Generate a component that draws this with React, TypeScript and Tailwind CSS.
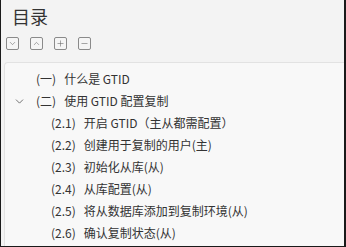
import { ChevronDown, ChevronUp, Plus, Minus } from "lucide-react";

type Item = { label: string; title: string; open?: boolean; children?: Item[] };

const toc: Item[] = [
  { label: "(一)", title: "什么是 GTID" },
  {
    label: "(二)",
    title: "使用 GTID 配置复制",
    open: true,
    children: [
      { label: "(2.1)", title: "开启 GTID（主从都需配置）" },
      { label: "(2.2)", title: "创建用于复制的用户(主)" },
      { label: "(2.3)", title: "初始化从库(从)" },
      { label: "(2.4)", title: "从库配置(从)" },
      { label: "(2.5)", title: "将从数据库添加到复制环境(从)" },
      { label: "(2.6)", title: "确认复制状态(从)" },
    ],
  },
];

const font = { fontFamily: '"Noto Sans CJK SC", "Noto Sans", sans-serif' };

function ToolButton({ children }: { children: React.ReactNode }) {
  return (
    <button className="w-[13px] h-[13px] border border-[#8a8a8a] rounded-[2px] flex items-center justify-center text-[#666] bg-[#f5f5f5]">
      {children}
    </button>
  );
}

function Row({ item, depth }: { item: Item; depth: number }) {
  return (
    <>
      <div
        className="h-[22px] flex items-center text-[12px] text-[#333] whitespace-nowrap"
        style={{ paddingLeft: depth === 0 ? 8 : 23 }}
      >
        <span className="w-[23px] flex items-center">
          {item.children && <ChevronDown size={13} strokeWidth={1.5} className="text-[#555]" />}
        </span>
        <span>{item.label}</span>
        <span className="ml-[8px]">{item.title}</span>
      </div>
      {item.open && item.children?.map((c) => <Row key={c.label} item={c} depth={depth + 1} />)}
    </>
  );
}

export default function App() {
  return (
    <div
      className="w-[346px] h-[247px] bg-[#f3f3f3] border-l border-r-2 border-b border-[#1a1a1a] flex flex-col overflow-hidden"
      style={font}
    >
      <div className="pl-[11px] pt-[4px] text-[18px] leading-[24px] text-[#333]">目录</div>
      <div className="flex gap-[11px] pl-[5px] mt-[9px]">
        <ToolButton>
          <ChevronDown size={9} strokeWidth={1.5} />
        </ToolButton>
        <ToolButton>
          <ChevronUp size={9} strokeWidth={1.5} />
        </ToolButton>
        <ToolButton>
          <Plus size={9} strokeWidth={1.5} />
        </ToolButton>
        <ToolButton>
          <Minus size={9} strokeWidth={1.5} />
        </ToolButton>
      </div>
      <div className="flex-1 ml-[3px] mt-[12px] bg-[#f8f8f8] border-t border-l border-[#e2e2e2] rounded-tl-[4px] pt-[5px]">
        {toc.map((item) => (
          <Row key={item.label} item={item} depth={0} />
        ))}
      </div>
    </div>
  );
}
